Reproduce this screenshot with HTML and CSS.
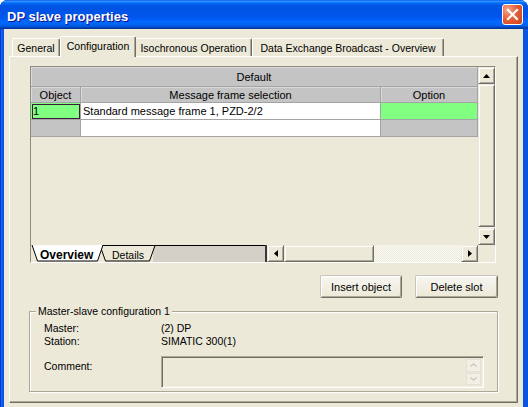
FILE: index.html
```html
<!DOCTYPE html>
<html>
<head>
<meta charset="utf-8">
<link rel="stylesheet" href="styles.css">
</head>
<body>
<div class="window">
  <div class="titlebar">
    <span class="title">DP slave properties</span>
    <span class="close">
      <svg width="19" height="19" viewBox="0 0 19 19"><path d="M5 5 L14 14 M14 5 L5 14" stroke="#fff" stroke-width="2.2" stroke-linecap="square"/></svg>
    </span>
  </div>
  <div class="client">
    <div class="tabs">
      <div class="tab t-general">General</div>
      <div class="tab active t-config">Configuration</div>
      <div class="tab t-iso">Isochronous Operation</div>
      <div class="tab t-dx">Data Exchange Broadcast - Overview</div>
    </div>
    <div class="panel">
      <div class="sheet">
        <div class="sheet-main">
          <div class="table">
            <div class="hcell span3">Default</div>
            <div class="hcell">Object</div>
            <div class="hcell">Message frame selection</div>
            <div class="hcell">Option</div>
            <div class="cell obj green sel">1</div>
            <div class="cell msg">Standard message frame 1, PZD-2/2</div>
            <div class="cell opt green"></div>
            <div class="cell obj gray"></div>
            <div class="cell msg"></div>
            <div class="cell opt gray"></div>
          </div>
          <div class="vscroll">
            <div class="sbtn"><svg width="7" height="4" viewBox="0 0 7 4"><polygon points="3.5,0 7,4 0,4" fill="#000"/></svg></div>
            <div class="vthumb"></div>
            <div class="vtrack"></div>
            <div class="sbtn"><svg width="7" height="4" viewBox="0 0 7 4"><polygon points="0,0 7,0 3.5,4" fill="#000"/></svg></div>
          </div>
        </div>
        <div class="sheet-bottom">
          <svg class="sheettabs" width="234" height="17" viewBox="0 0 234 17">
            <rect x="0" y="0" width="234" height="17" fill="#ece9d8"/>
            <rect x="122" y="0" width="112" height="17" fill="#d4d0c8"/>
            <line x1="69" y1="0.5" x2="234" y2="0.5" stroke="#000"/>
            <polygon points="69,0.5 74.5,16 118.5,16 124,0.5" fill="#ece9d8" stroke="#000"/>
            <polygon points="1,0 6.5,16 66.5,16 72,0" fill="#fff"/>
            <polyline points="1,0 6.5,16 66.5,16 72,0" fill="none" stroke="#000"/>
            <text x="9" y="13.5" class="st-over">Overview</text>
            <text x="81" y="13.5" class="st-det">Details</text>
          </svg>
          <div class="divider"></div>
          <div class="hscroll">
            <div class="sbtn"><svg width="4" height="7" viewBox="0 0 4 7"><polygon points="0,3.5 4,0 4,7" fill="#000"/></svg></div>
            <div class="hthumb"></div>
            <div class="htrack"></div>
            <div class="sbtn"><svg width="4" height="7" viewBox="0 0 4 7"><polygon points="0,0 4,3.5 0,7" fill="#000"/></svg></div>
          </div>
          <div class="corner"></div>
        </div>
      </div>
      <div class="buttons">
        <button class="btn btn-insert">Insert object</button>
        <button class="btn btn-delete">Delete slot</button>
      </div>
      <div class="group">
        <div class="legend">Master-slave configuration 1</div>
        <div class="fields">
          <span class="lbl">Master:</span><span class="val">(2) DP</span>
          <span class="lbl">Station:</span><span class="val">SIMATIC 300(1)</span>
          <span class="lbl comment-label">Comment:</span>
          <div class="comment-box">
            <div class="spin">
              <div class="spin-btn"><svg width="7" height="4" viewBox="0 0 7 4"><polyline points="0.5,3.5 3.5,0.8 6.5,3.5" fill="none" stroke="#c9c7ba" stroke-width="1.2"/></svg></div>
              <div class="spin-btn"><svg width="7" height="4" viewBox="0 0 7 4"><polyline points="0.5,0.5 3.5,3.2 6.5,0.5" fill="none" stroke="#c9c7ba" stroke-width="1.2"/></svg></div>
            </div>
          </div>
        </div>
      </div>
    </div>
  </div>
</div>
</body>
</html>
```

FILE: styles.css
```css
html, body {
  margin: 0;
  padding: 0;
  background: #ffffff;
}
body {
  font-family: "Liberation Sans", Arial, sans-serif;
  color: #000;
}
.window {
  width: 528px;
  height: 407px;
  display: flex;
  flex-direction: column;
  background: #0a54e2;
  box-shadow: inset 1px 0 #0831d9, inset 2px 0 #166aee;
  border-radius: 8px 8px 0 0;
  overflow: hidden;
}
.titlebar {
  height: 29px;
  flex: none;
  display: flex;
  align-items: center;
  padding-left: 7px;
  background: linear-gradient(to bottom, #0058ee 0%, #3593ff 4%, #288eff 6%, #127dff 8%, #036ffc 10%, #0262ee 14%, #0057e5 20%, #0054e3 24%, #0055eb 56%, #005bf5 66%, #026afe 76%, #0062ef 86%, #0052d6 92%, #0040ab 96%, #003092 100%);
}
.title {
  flex: 1;
  color: #fff;
  font-weight: bold;
  font-size: 13px;
  margin-top: 4px;
  text-shadow: 1px 1px #0f1089;
}
.close {
  width: 21px;
  height: 21px;
  margin-right: 5px;
  box-sizing: border-box;
  border: 1px solid #fff;
  border-radius: 3px;
  background: radial-gradient(circle at 25% 25%, #f6a58a 0%, #e4603a 45%, #cc4118 100%);
  display: flex;
  align-items: center;
  justify-content: center;
}
.close svg { display: block; }

.client {
  flex: 1;
  margin: 0 5px 0 4px;
  background: #ece9d8;
  padding: 7px 0 0 5px;
  display: flex;
  flex-direction: column;
}
.tabs {
  height: 20px;
  display: flex;
  align-items: flex-end;
  padding-left: 3px;
  font-size: 10.5px;
}
.tab {
  box-sizing: border-box;
  height: 18px;
  padding-top: 3px;
  line-height: 13px;
  text-align: center;
  white-space: nowrap;
  background: #ece9d8;
  border-top: 1px solid #fff;
  border-left: 1px solid #fff;
  border-right: 1px solid #716f64;
  box-shadow: inset -1px 0 #aca899;
  border-radius: 2px 2px 0 0;
}
.tab.active {
  height: 21px;
  padding-top: 3px;
  margin-bottom: -1px;
  position: relative;
  z-index: 1;
}
.t-general { width: 48px; }
.t-config { width: 76px; }
.t-iso { width: 116px; border-left: none; }
.t-dx { width: 192px; }

.panel {
  box-sizing: border-box;
  width: 509px;
  height: 347px;
  border: 1px solid;
  border-color: #fff #716f64 #716f64 #fff;
  box-shadow: inset -1px -1px #aca899;
  padding: 9px 19px 0 20px;
  display: flex;
  flex-direction: column;
}

.sheet {
  box-sizing: border-box;
  width: 466px;
  height: 197px;
  border: 1px solid;
  border-color: #8d8b82 #fff #fff #8d8b82;
  display: flex;
  flex-direction: column;
  font-size: 11px;
}
.sheet-main {
  height: 178px;
  display: flex;
}
.table {
  width: 447px;
  display: grid;
  grid-template-columns: 50px 300px 97px;
  grid-template-rows: 20px 16px 17px 17px;
  align-content: start;
}
.hcell {
  box-sizing: border-box;
  background: #c4c4c4;
  border-right: 1px solid #a4a4a4;
  border-bottom: 1px solid #a4a4a4;
  box-shadow: inset 1px 1px #dadada;
  display: flex;
  align-items: center;
  justify-content: center;
  white-space: nowrap;
}
.hcell.span3 { grid-column: 1 / 4; }
.cell {
  box-sizing: border-box;
  border-right: 1px solid #a4a4a4;
  border-bottom: 1px solid #a4a4a4;
  background: #fff;
  display: flex;
  align-items: center;
  padding-left: 2px;
  white-space: nowrap;
}
.cell.green { background: #80ff80; }
.cell.gray { background: #c4c4c4; }
.cell.sel {
  outline: 1px solid #3c1a3c;
  outline-offset: -2px;
  padding-left: 2px;
}

.vscroll {
  width: 17px;
  display: flex;
  flex-direction: column;
}
.sbtn, .vthumb, .hthumb {
  box-sizing: border-box;
  background: #ece9d8;
  border: 1px solid;
  border-color: #ece9d8 #716f64 #716f64 #ece9d8;
  box-shadow: inset 1px 1px #fff, inset -1px -1px #aca899;
}
.sbtn {
  width: 17px;
  height: 17px;
  flex: none;
  display: flex;
  align-items: center;
  justify-content: center;
}
.sbtn svg { display: block; }
.vthumb { height: 143px; }
.vtrack {
  flex: 1;
  background-color: #f4f3ee;
}

.sheet-bottom {
  height: 17px;
  display: flex;
}
.sheettabs { display: block; flex: none; }
.st-over {
  font-family: "Liberation Sans", Arial, sans-serif;
  font-weight: bold;
  font-size: 12px;
}
.st-det {
  font-family: "Liberation Sans", Arial, sans-serif;
  font-size: 10.5px;
}
.divider {
  width: 2px;
  background: #3a3a3a;
}
.hscroll {
  width: 211px;
  display: flex;
}
.hthumb { width: 90px; height: 17px; }
.htrack {
  flex: 1;
  background-color: #fff;
  background-image: repeating-conic-gradient(#ece9d8 0 25%, #fbfbf8 0 50%);
  background-size: 2px 2px;
}
.corner {
  width: 17px;
  background: #ece9d8;
}

.buttons {
  margin-top: 12px;
  display: flex;
  justify-content: flex-end;
  gap: 13px;
}
.btn {
  box-sizing: border-box;
  height: 23px;
  margin: 0;
  padding: 0;
  font-family: "Liberation Sans", Arial, sans-serif;
  font-size: 11px;
  color: #000;
  background: linear-gradient(#f7f6f1, #ece9d8);
  border: 1px solid;
  border-color: #c9c6b9 #716f64 #716f64 #c9c6b9;
  box-shadow: inset 1px 1px #fff, inset -1px -1px #aca899;
  border-radius: 2px;
}
.btn-insert { width: 82px; }
.btn-delete { width: 83px; }

.group {
  box-sizing: border-box;
  margin: 13px 0 0 -1px;
  height: 81px;
  border: 1px solid #aca899;
  box-shadow: inset 1px 1px #fff, 1px 1px #fff;
  font-size: 10.5px;
}
.legend {
  display: table;
  margin: -7px 0 0 6px;
  padding: 0 2px;
  line-height: 13px;
  background: #ece9d8;
}
.fields {
  margin-top: 4px;
  padding-left: 14px;
  display: grid;
  grid-template-columns: 117px 323px;
  grid-auto-rows: 13px;
  line-height: 13px;
  font-size: 10.5px;
}
.comment-label {
  margin-top: 8px;
  padding-top: 4px;
}
.comment-box {
  box-sizing: border-box;
  margin-top: 8px;
  height: 32px;
  border: 1px solid;
  border-color: #aca899 #fff #fff #aca899;
  box-shadow: inset 1px 1px #716f64, inset -1px -1px #f1efe2;
  display: flex;
  justify-content: flex-end;
  padding: 2px 2px 2px 0;
}
.spin {
  width: 15px;
  display: flex;
  flex-direction: column;
  gap: 1px;
}
.spin-btn {
  flex: 1;
  box-sizing: border-box;
  border: 1px solid #e3e1d6;
  background: #f1efe6;
  display: flex;
  align-items: center;
  justify-content: center;
}
.spin-btn svg { display: block; }
```
